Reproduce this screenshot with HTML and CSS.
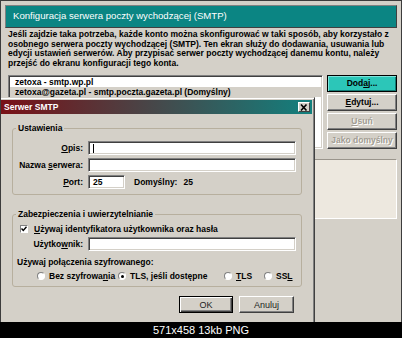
FILE: index.html
```html
<!DOCTYPE html>
<html lang="pl">
<head>
	<meta charset="UTF-8">
	<meta name="viewport" content="width=device-width, initial-scale=1.0">
	<title>Serwer SMTP</title>
	<link rel="stylesheet" href="styles.css">
</head>
<body>
	<div class="shot">
		<div class="window">
			<h1 class="banner">Konfiguracja serwera poczty wychodzącej (SMTP)</h1>
			<p class="intro">Jeśli zajdzie taka potrzeba, każde konto można skonfigurować w taki sposób, aby korzystało z<br>osobnego serwera poczty wychodzącej (SMTP). Ten ekran służy do dodawania, usuwania lub<br>edycji ustawień serwerów. Aby przypisać serwer poczty wychodzącej danemu kontu, należy<br>przejść do ekranu konfiguracji tego konta.</p>

			<div class="servers">
				<ul class="list">
					<li>zetoxa - smtp.wp.pl</li>
					<li class="sel">zetoxa@gazeta.pl - smtp.poczta.gazeta.pl (Domyślny)</li>
				</ul>
				<div class="actions">
					<div class="btn hot"><span>Dod<u>a</u>j...</span></div>
					<div class="btn"><span><u>E</u>dytuj...</span></div>
					<div class="btn off"><span><u>U</u>suń</span></div>
					<div class="btn off"><span>Jako domyślny</span></div>
				</div>
			</div>

			<div class="details"></div>
		</div>

		<div class="dialog">
			<div class="caption-bar">
				<span>Serwer SMTP</span>
				<span class="close"><svg width="8" height="7" viewBox="0 0 8 7"><path d="M1 0.5 L6.5 6.5 M6.5 0.5 L1 6.5" stroke="#000" stroke-width="1.6"/></svg></span>
			</div>
			<div class="dialog-body">
				<fieldset class="group">
					<legend>Ustawienia</legend>
					<div class="form">
						<label><u>O</u>pis:</label>
						<div class="field"><span class="caret"></span></div>
						<label>Nazwa <u>s</u>erwera:</label>
						<div class="field"></div>
						<label><u>P</u>ort:</label>
						<div class="port-row">
							<div class="field port">25</div>
							<span class="def">Domyślny:</span>
							<span class="def-val">25</span>
						</div>
					</div>
				</fieldset>

				<fieldset class="group secure">
					<legend>Zabezpieczenia i uwierzytelnianie</legend>
					<div class="check-row">
						<span class="check"><svg width="6" height="6" viewBox="0 0 6 6"><path d="M0.5 2.5 L2.3 4.5 L5.5 0.8" stroke="#000" stroke-width="1.4" fill="none"/></svg></span>
						<span><u>U</u>żywaj identyfikatora użytkownika oraz hasła</span>
					</div>
					<div class="form user">
						<label>Użytko<u>w</u>nik:</label>
						<div class="field"></div>
					</div>
					<div class="enc-title">Używaj połączenia szyfrowanego:</div>
					<div class="radios">
						<span class="radio"><i></i><span>Bez szyfrowa<u>n</u>ia</span></span>
						<span class="radio on"><i></i><span>TLS, jeśli dostępne</span></span>
						<span class="radio"><i></i><span><u>T</u>LS</span></span>
						<span class="radio"><i></i><span>SS<u>L</u></span></span>
					</div>
				</fieldset>

				<div class="dialog-buttons">
					<div class="btn plain default">OK</div>
					<div class="btn plain">Anuluj</div>
				</div>
			</div>
		</div>
	</div>
	<div class="footer">571x458 13kb PNG</div>
</body>
</html>
```

FILE: styles.css
```css
html, body { margin: 0; padding: 0; background: #000; overflow: hidden; }
body { width: 402px; height: 338px; font-family: "Liberation Sans", Arial, sans-serif; font-size: 8.5px; color: #000; }
div { box-sizing: border-box; }
u { text-underline-offset: 1px; }

.shot {
	position: relative;
	width: 402px;
	height: 322px;
	background: #d4d0c8;
	border: 1px solid #3c3c3c;
	border-bottom: 0;
	overflow: hidden;
}

.window { padding: 4px 4px 0 4px; display: flex; flex-direction: column; }

.banner {
	margin: 0;
	height: 21px;
	padding-left: 7px;
	background: #0b8583;
	border: 1px solid;
	border-color: #808080 #404040 #404040 #808080;
	color: #fff;
	font-size: 9.6px;
	font-weight: normal;
	line-height: 19px;
	white-space: nowrap;
}

.intro {
	margin: 2px 0 0 3px;
	font-weight: bold;
	line-height: 9.7px;
	white-space: nowrap;
}

.servers { display: flex; gap: 4px; margin: 6px 0 0 3px; }

.list {
	width: 315px;
	height: 74px;
	margin: 0;
	padding: 1px 0 0 0;
	list-style: none;
	background: #fff;
	border: 1px solid;
	border-color: #808080 #fff #fff #808080;
	box-shadow: inset 1px 1px #404040, inset -1px -1px #d4d0c8;
	font-weight: bold;
	box-sizing: border-box;
}
.list li { height: 10px; line-height: 10px; padding-left: 5px; margin: 0 1px; white-space: nowrap; }
.list li.sel { background: #d4d0c8; }

.actions { width: 70px; display: flex; flex-direction: column; gap: 2px; }

.btn {
	height: 17px;
	display: flex;
	justify-content: center;
	align-items: center;
	font-weight: bold;
	background: #d4d0c8;
	border: 1px solid;
	border-color: #fff #404040 #404040 #fff;
	box-shadow: inset -1px -1px #808080;
	white-space: nowrap;
}
.btn.hot {
	background: #2cc6b8;
	border-color: #000;
	box-shadow: inset 1px 1px #7ee3da, inset -1px -1px #127d75;
}
.btn.off { color: #a29d93; text-shadow: 1px 1px #fff; }

.details {
	height: 60px;
	margin: 10px 0 0 3px;
	background: #ede8df;
	border: 1px solid;
	border-color: #9a958c #fff #fff #9a958c;
}

/* dialog lies on top of the main window */
.dialog {
	position: absolute;
	left: -5px;
	top: 96px;
	width: 319px;
	height: 240px;
	padding: 2px;
	background: #d4d0c8;
	border: 1px solid;
	border-color: #d4d0c8 #404040 #404040 #d4d0c8;
	box-shadow: inset 1px 1px #fff, inset -1px -1px #808080;
}

.caption-bar {
	height: 14px;
	display: flex;
	justify-content: space-between;
	align-items: center;
	padding: 0 2px 0 5px;
	background: linear-gradient(to right, #7a1016, #12807e);
	color: #fff;
	font-weight: bold;
}
.close {
	width: 12px;
	height: 10px;
	display: flex;
	justify-content: center;
	align-items: center;
	background: #d4d0c8;
	border: 1px solid;
	border-color: #fff #404040 #404040 #fff;
	box-sizing: border-box;
}

.dialog-body { padding: 9px 10px 0 13px; }

.group {
	margin: 0;
	padding: 8px 5px 5px 0;
	border: 1px solid #b7af9e;
	border-radius: 3px;
	min-width: 0;
}
.group legend { margin-left: 3px; padding: 0 2px; font-weight: bold; line-height: 10px; }
.group.secure { margin-top: 14px; padding-top: 5px; padding-bottom: 5px; }

.form {
	display: grid;
	grid-template-columns: 70px 208px;
	column-gap: 5px;
	row-gap: 3px;
	align-items: center;
	font-weight: bold;
}
.form label { text-align: right; white-space: nowrap; }

.field {
	height: 14px;
	background: #fff;
	border: 1px solid;
	border-color: #808080 #fff #fff #808080;
	box-shadow: inset 1px 1px #404040, inset -1px -1px #d4d0c8;
	display: flex;
	align-items: center;
	padding-left: 4px;
}
.caret { width: 1px; height: 9px; background: #000; }

.port-row { display: flex; align-items: center; }
.field.port { width: 37px; }
.def { margin-left: 9px; }
.def-val { margin-left: 6px; }

.check-row { display: flex; align-items: center; gap: 6px; padding-left: 7px; height: 10px; font-weight: bold; white-space: nowrap; }
.check {
	width: 8px;
	height: 8px;
	display: flex;
	justify-content: center;
	align-items: center;
	background: #fff;
	border: 1px solid;
	border-color: #808080 #fff #fff #808080;
	box-sizing: border-box;
}

.form.user { margin-top: 3px; }

.enc-title { margin: 6px 0 0 4px; height: 10px; line-height: 10px; font-weight: bold; white-space: nowrap; }

.radios {
	display: grid;
	grid-template-columns: 81px 106px 40px auto;
	margin: 4px 0 0 24px;
	height: 10px;
	font-weight: bold;
}
.radio { display: flex; align-items: center; gap: 4px; white-space: nowrap; }
.radio i {
	position: relative;
	width: 8px;
	height: 8px;
	flex: none;
	box-sizing: border-box;
	background: #fff;
	border: 1px solid;
	border-color: #808080 #fff #fff #808080;
	border-radius: 50%;
}
.radio.on i::after {
	content: "";
	position: absolute;
	left: 1.5px;
	top: 1.5px;
	width: 3px;
	height: 3px;
	border-radius: 50%;
	background: #000;
}

.dialog-buttons { display: flex; justify-content: flex-end; gap: 6px; margin-top: 9px; padding-right: 8px; }
.btn.plain { width: 55px; font-weight: normal; font-size: 9px; color: #222; }
.btn.plain.default { width: 54px; border-color: #000; box-shadow: inset 1px 1px #fff, inset -1px -1px #404040, inset -2px -2px #808080; }

.footer {
	height: 16px;
	color: #fff;
	font-size: 11px;
	line-height: 16px;
	text-align: center;
}
```
